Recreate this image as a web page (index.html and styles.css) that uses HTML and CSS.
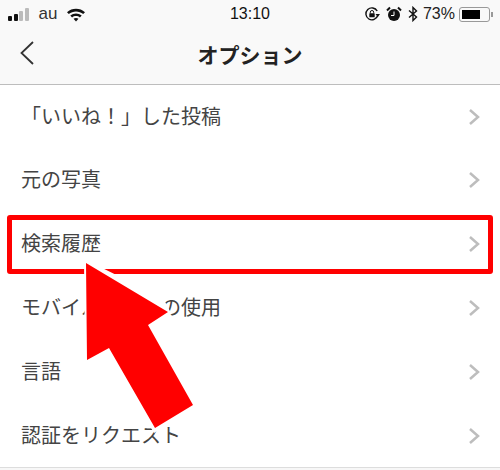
FILE: index.html
```html
<!DOCTYPE html>
<html lang="ja">
<head>
<meta charset="utf-8">
<title>オプション</title>
<link rel="stylesheet" href="styles.css">
</head>
<body>
<div class="phone">
  <header class="top">
    <div class="status">
      <div class="status-left">
        <span class="signal"><i></i><i></i><i></i><i></i></span>
        <span class="carrier">au</span>
        <svg class="wifi" viewBox="0 0 20 15" width="20" height="15"><path d="M1 5.200C6 .6 14 .6 19 5.200l-1.800 1.900C13.200 3.500 6.800 3.500 2.800 7.100z"/><path d="M4.300 8.600c3.300-2.900 8.100-2.900 11.400 0l-1.800 1.900c-2.300-1.900-5.500-1.900-7.800 0z"/><path d="M7.500 11.700c1.500-1.100 3.500-1.100 5 0L10 14.500z"/></svg>
      </div>
      <div class="time">13:10</div>
      <div class="status-right">
        <svg class="lock" viewBox="0 0 16 16" width="16" height="16"><path d="M13.700 9.500A6 6 0 1 1 13.200 5" fill="none" stroke="#111" stroke-width="1.400"/><path d="M11.500 8h4.500l-2.200 3z" fill="#111"/><rect x="5.300" y="7.300" width="5.400" height="4" rx=".6" fill="#111"/><path d="M6.300 7.500V6.200a1.700 1.700 0 0 1 3.400 0v1.300" fill="none" stroke="#111"/></svg>
        <svg class="alarm" viewBox="0 0 16 16" width="16" height="16"><circle cx="8" cy="9" r="6" fill="#111"/><path d="M1 4.500 4 1.500 M15 4.500 12 1.500" stroke="#111" stroke-width="2"/><path d="M8 5.500V9.500H5" fill="none" stroke="#fff" stroke-width="1"/></svg>
        <svg class="bt" viewBox="0 0 10 16" width="10" height="16"><path d="M1 4.500 8.500 11 5 14.500V1.500L8.500 5 1 11.500" fill="none" stroke="#111" stroke-width="1.400"/></svg>
        <span class="pct">73%</span>
        <span class="battery"><span class="level"></span></span><span class="nub"></span>
      </div>
    </div>
    <nav class="nav">
      <svg class="back" viewBox="0 0 16 26" width="16" height="26"><path d="M14 2 2.500 13 14 24" fill="none" stroke="#333" stroke-width="1.800"/></svg>
      <h1 class="title">オプション</h1>
    </nav>
  </header>
  <ul class="list">
    <li class="row"><span class="label">「いいね！」した投稿</span><svg class="chev" viewBox="0 0 12 18" width="12" height="18"><path d="M2 2l8 7-8 7" /></svg></li>
    <li class="row"><span class="label">元の写真</span><svg class="chev" viewBox="0 0 12 18" width="12" height="18"><path d="M2 2l8 7-8 7" /></svg></li>
    <li class="row"><span class="label">検索履歴</span><svg class="chev" viewBox="0 0 12 18" width="12" height="18"><path d="M2 2l8 7-8 7" /></svg></li>
    <li class="row"><span class="label">モバイルデータの使用</span><svg class="chev" viewBox="0 0 12 18" width="12" height="18"><path d="M2 2l8 7-8 7" /></svg></li>
    <li class="row"><span class="label">言語</span><svg class="chev" viewBox="0 0 12 18" width="12" height="18"><path d="M2 2l8 7-8 7" /></svg></li>
    <li class="row"><span class="label">認証をリクエスト</span><svg class="chev" viewBox="0 0 12 18" width="12" height="18"><path d="M2 2l8 7-8 7" /></svg></li>
  </ul>
  <div class="highlight"></div>
  <svg class="arrow" viewBox="0 0 500 470" width="500" height="470"><polygon class="halo" points="84,259 163,298 171,313 153,326 198,406 154,433 107,353 85,365"/><polygon points="86,263 168,312 148,325 193,405 155,428 109,348 87,360"/></svg>
</div>
</body>
</html>
```
FILE: styles.css
```css
* { box-sizing: border-box; }
html, body { margin: 0; padding: 0; }
body { background: #fff; font-family: "Noto Sans CJK JP", "Liberation Sans", sans-serif; }
.phone { position: relative; width: 500px; height: 470px; overflow: hidden; background: #f7f7f7; }
.top { height: 85px; background: #f9f9f9; border-bottom: 1px solid #bdbdbd; }
.status { height: 28px; display: flex; align-items: center; justify-content: space-between; padding: 0 8px; position: relative; color: #222; }
.status-left { display: flex; align-items: center; width: 150px; }
.signal { display: flex; align-items: flex-end; gap: 1.500px; height: 13px; }
.signal i { display: block; width: 4px; background: #bbb; border-radius: 1px; }
.signal i:nth-child(1) { height: 5px; background: #111; }
.signal i:nth-child(2) { height: 7px; background: #111; }
.signal i:nth-child(3) { height: 10px; }
.signal i:nth-child(4) { height: 13px; }
.carrier { font-family: "Liberation Sans", sans-serif; font-size: 17px; margin-left: 10px; color: #333; }
.wifi { margin-left: 9px; fill: #111; }
.time { font-family: "Liberation Sans", sans-serif; font-size: 16px; color: #111; position: absolute; left: 0; right: 0; text-align: center; top: 5px; }
.status-right { display: flex; align-items: center; z-index: 1; }
.lock { margin-right: 6px; }
.alarm { margin-right: 6px; }
.pct { font-family: "Liberation Sans", sans-serif; font-size: 16px; color: #222; margin-left: 5px; }
.battery { display: block; width: 31px; height: 15px; margin-left: 4px; padding: 2px; border: 1px solid #999; border-radius: 3px; }
.level { display: block; width: 73%; height: 100%; background: #000; }
.nub { display: block; width: 2px; height: 5px; margin-left: 1px; background: #999; margin-right: -1px; }
.nav { height: 56px; position: relative; display: flex; align-items: center; justify-content: center; padding-bottom: 3px; }
.back { position: absolute; left: 19px; top: 12px; }
.title { margin: 0; font-size: 21px; font-weight: 700; color: #222; line-height: 1; }
.list { list-style: none; margin: 0; padding: 0 0 0 22px; background: #fff; height: 383px; border-bottom: 1px solid #ddd; }
.row { height: 64px; display: flex; align-items: center; justify-content: space-between; padding-right: 20px; }
.row:first-child { height: 63px; }
.label { font-size: 20px; color: #444; line-height: 1; padding-bottom: 2px; margin-left: -1px; }
.chev { fill: none; stroke: #bdbdbd; stroke-width: 2.500; }
.highlight { position: absolute; left: 7px; top: 215px; width: 486px; height: 59px; border: 5px solid #f00; border-radius: 3px; }
.arrow { position: absolute; left: 0; top: 0; fill: #f00; }
.arrow .halo { fill: #fff; }
```
